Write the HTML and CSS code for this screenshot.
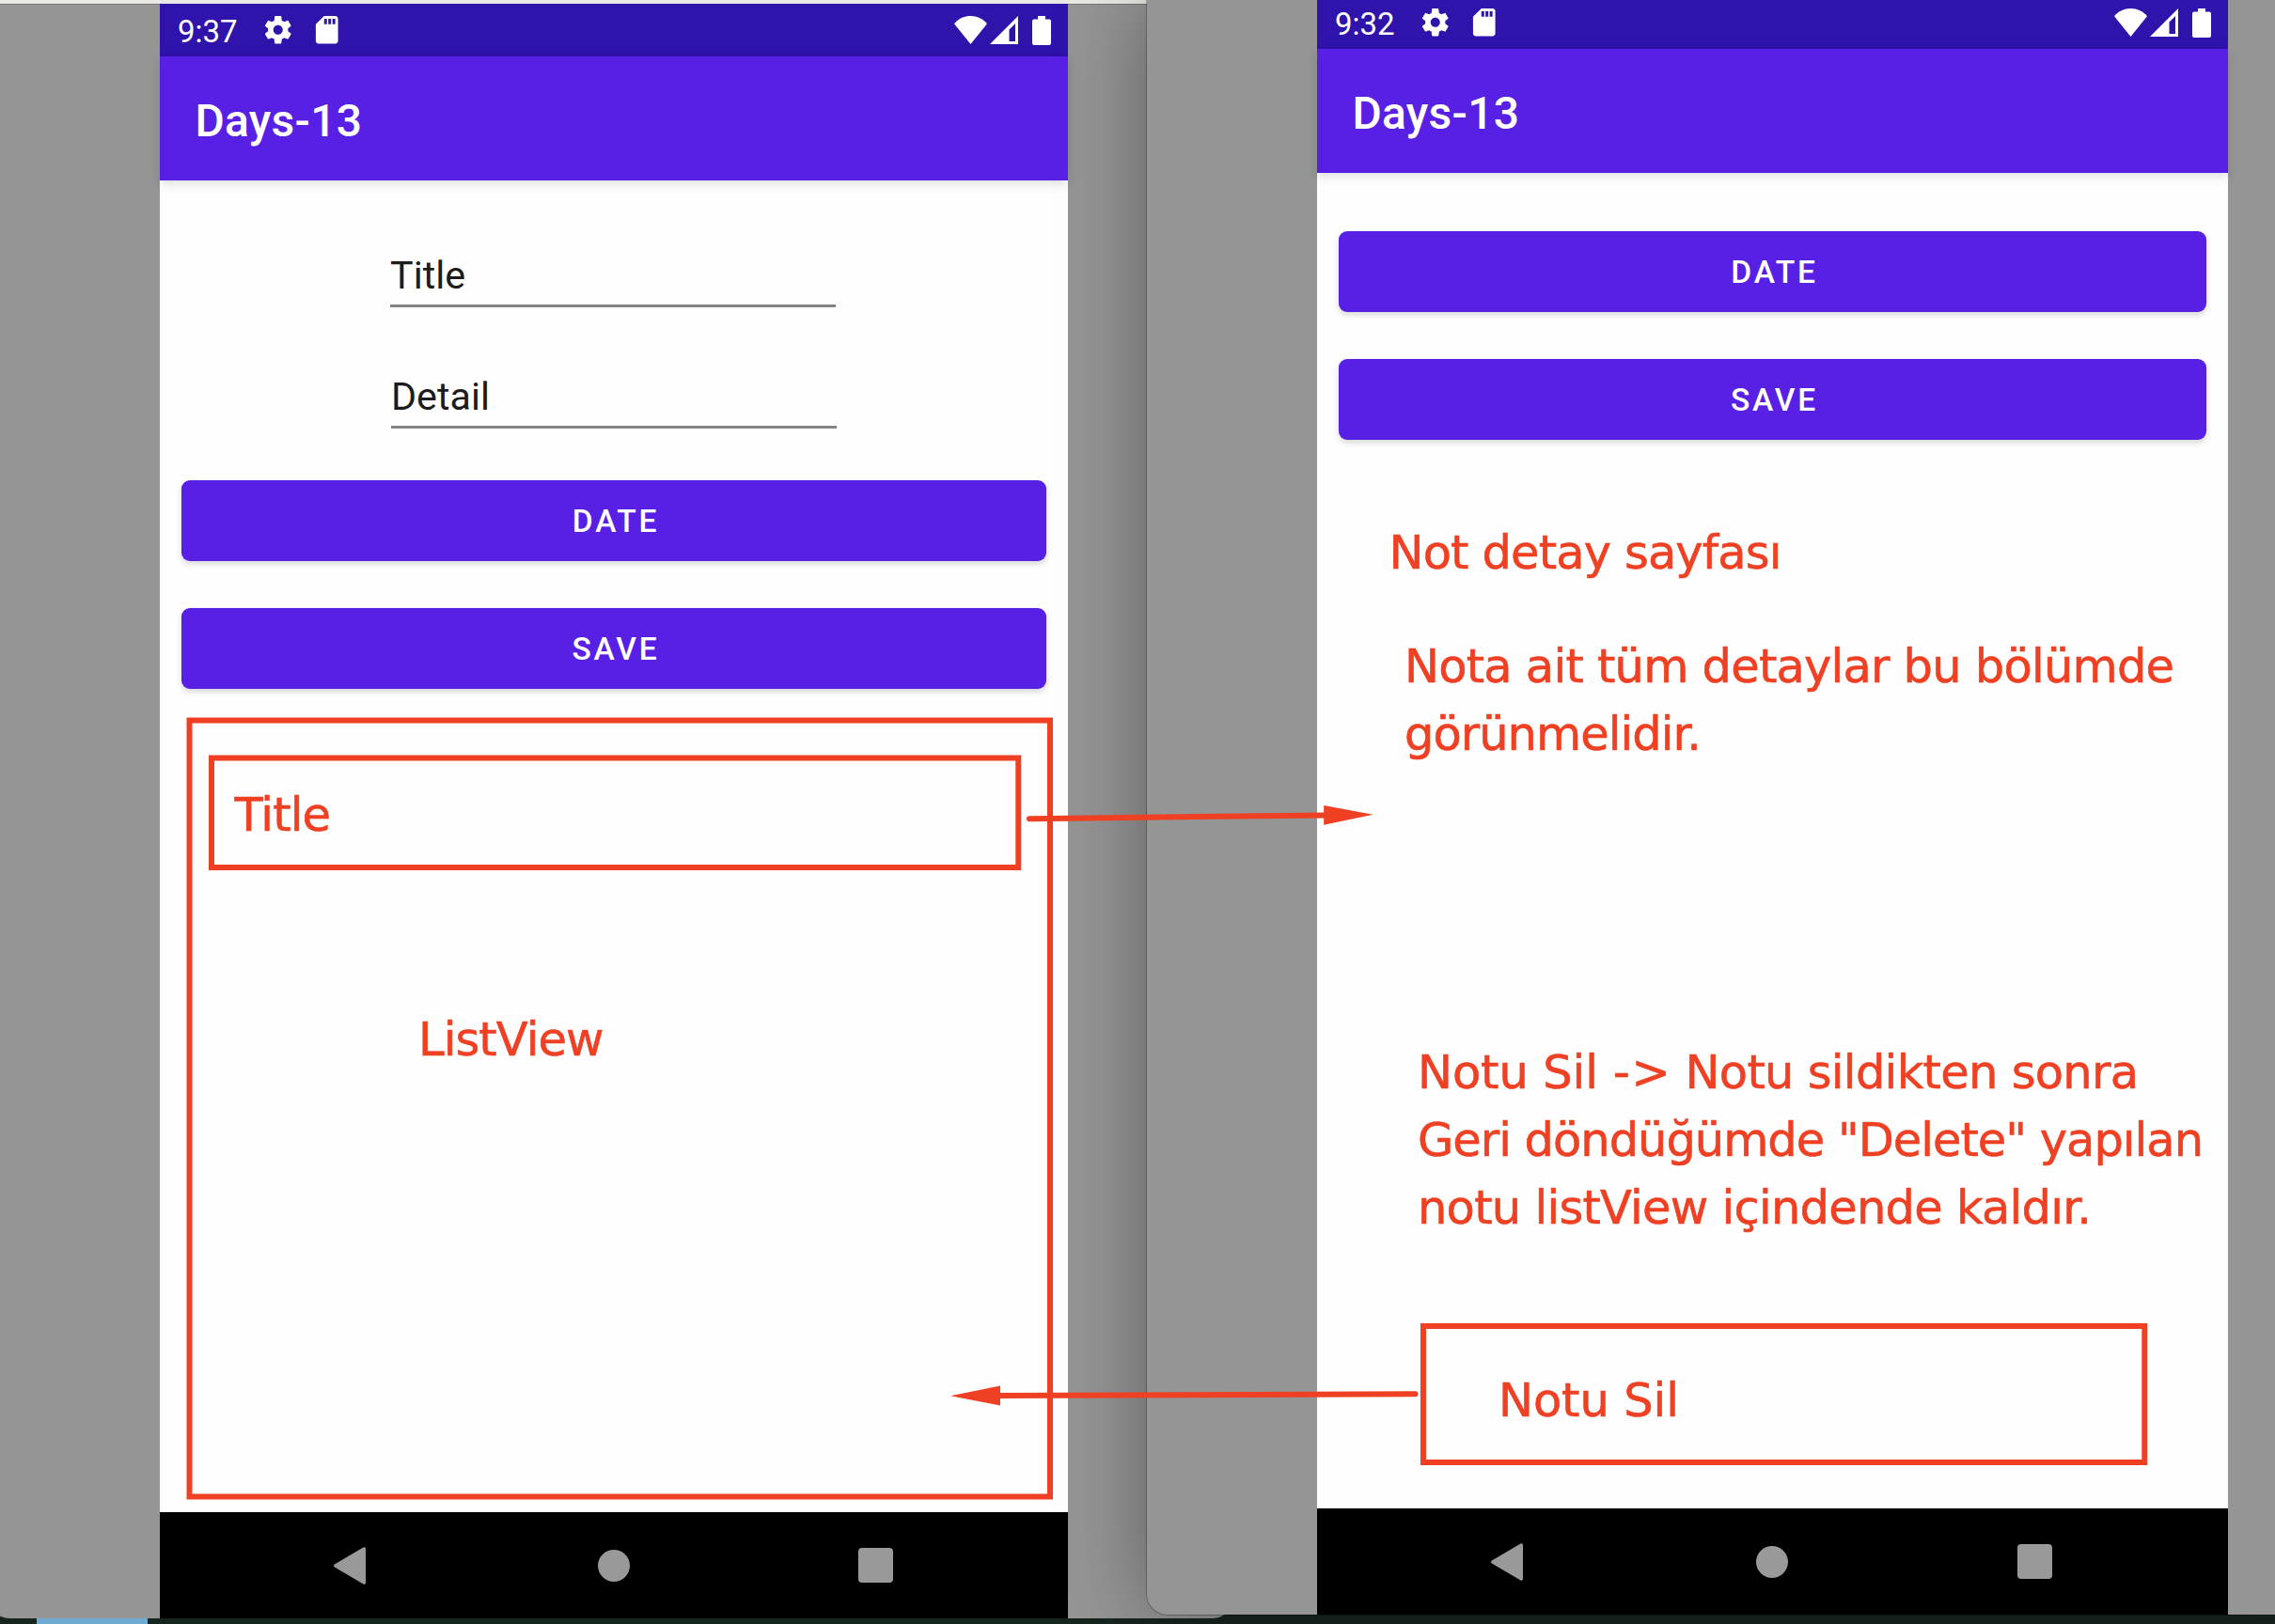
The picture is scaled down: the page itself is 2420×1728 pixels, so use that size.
FILE: index.html
```
<!DOCTYPE html>
<html lang="tr">
<head>
<meta charset="utf-8">
<title>Days-13</title>
<link rel="stylesheet" href="styles.css">
</head>
<body>
<svg class="symbols" aria-hidden="true">
  <symbol id="gear" viewBox="0 0 24 24"><path d="M19.14 12.94c.04-.3.06-.61.06-.94 0-.32-.02-.64-.07-.94l2.03-1.58c.18-.14.23-.41.12-.61l-1.92-3.32c-.12-.22-.37-.29-.59-.22l-2.39.96c-.5-.38-1.03-.7-1.62-.94L14.400 2.500c-.04-.3-.24-.5-.5-.5h-3.800c-.26 0-.46.2-.5.5L9.250 5.350c-.59.24-1.130.57-1.620.94l-2.390-.96c-.22-.08-.47 0-.59.220L2.740 8.870c-.12.21-.08.47.12.61l2.030 1.580c-.05.3-.09.63-.09.94s.02.64.07.94l-2.030 1.580c-.18.14-.23.41-.12.61l1.920 3.320c.12.22.37.29.59.22l2.390-.96c.5.38 1.030.7 1.620.94l.36 2.850c.04.300.24.500.500.500h3.800c.260 0 .460-.200.500-.500l.36-2.850c.59-.24 1.130-.56 1.620-.94l2.390.96c.22.08.47 0 .59-.22l1.920-3.320c.12-.22.07-.47-.12-.61l-2.010-1.580zM12 15.400c-1.880 0-3.400-1.520-3.400-3.400s1.520-3.400 3.400-3.400 3.400 1.520 3.400 3.400-1.520 3.400-3.400 3.400z"/></symbol>
  <symbol id="sd" viewBox="0 0 24 24"><path d="M18 2h-8L4 8v12c0 1.100.9 2 2 2h12c1.100 0 2-.9 2-2V4c0-1.100-.9-2-2-2zm-6 6h-2V4h2v4zm3 0h-2V4h2v4zm3 0h-2V4h2v4z"/></symbol>
  <symbol id="wifi" viewBox="0 0 35 30"><path d="M17.500 30 0 8.200C4.500 3 10.500 0 17.500 0S30.500 3 35 8.200z"/></symbol>
  <symbol id="signal" viewBox="0 0 30 30"><path fill-rule="evenodd" d="M30 0v30H0zM27 8l-6.500 6.500V27H27z"/></symbol>
  <symbol id="battery" viewBox="0 0 20 31"><path d="M6 0h8v3.500h4a2 2 0 0 1 2 2V29a2 2 0 0 1-2 2H2a2 2 0 0 1-2-2V5.500a2 2 0 0 1 2-2h4z"/></symbol>
  <symbol id="back" viewBox="0 0 34 40"><path d="M31 .8c1.500-1.200 3-.5 3 1.200v36c0 1.700-1.500 2.400-3 1.200L.9 21.500c-1.200-1-1.200-2 0-3z"/></symbol>
</svg>

<main class="desktop">
  <div class="dock-tile"></div>
  <section class="window window-list">
    <div class="phone">
      <div class="status">
        <span class="clock">9:37</span>
        <svg class="ico"><use href="#gear"/></svg>
        <svg class="ico"><use href="#sd"/></svg>
        <div class="system">
          <svg class="wifi"><use href="#wifi"/></svg>
          <svg class="signal"><use href="#signal"/></svg>
          <svg class="battery"><use href="#battery"/></svg>
        </div>
      </div>
      <header class="appbar">Days-13</header>
      <div class="content">
        <div class="field">Title</div>
        <div class="field field-detail">Detail</div>
        <button class="btn">DATE</button>
        <button class="btn">SAVE</button>
      </div>
      <nav class="navbar">
        <svg class="back"><use href="#back"/></svg>
        <span class="home"></span>
        <span class="recent"></span>
      </nav>
    </div>
  </section>

  <section class="window window-detail">
    <div class="phone">
      <div class="status">
        <span class="clock">9:32</span>
        <svg class="ico"><use href="#gear"/></svg>
        <svg class="ico"><use href="#sd"/></svg>
        <div class="system">
          <svg class="wifi"><use href="#wifi"/></svg>
          <svg class="signal"><use href="#signal"/></svg>
          <svg class="battery"><use href="#battery"/></svg>
        </div>
      </div>
      <header class="appbar">Days-13</header>
      <div class="content">
        <button class="btn">DATE</button>
        <button class="btn">SAVE</button>
      </div>
      <nav class="navbar">
        <svg class="back"><use href="#back"/></svg>
        <span class="home"></span>
        <span class="recent"></span>
      </nav>
    </div>
  </section>

  <svg class="notes" viewBox="0 0 2420 1728">
    <g class="outline">
      <rect x="201.500" y="766.500" width="915.500" height="826"/>
      <rect x="225" y="806.500" width="858.300" height="116.500"/>
      <rect x="1514" y="1411" width="767.300" height="145"/>
      <path d="M1095 871.200 1410 867.400M1505.500 1483.300 1062 1485"/>
    </g>
    <path d="M1408.200 857v20.700L1460.500 866.700zM1064 1474.500v21L1011 1485.200z"/>
    <g class="labels">
      <text x="249.500" y="884" textLength="102.500">Title</text>
      <text x="445" y="1123" textLength="197.500">ListView</text>
      <text x="1477.500" y="605" textLength="418">Not detay sayfası</text>
      <text x="1494" y="726" textLength="819">Nota ait tüm detaylar bu bölümde</text>
      <text x="1494" y="798" textLength="316">görünmelidir.</text>
      <text x="1508" y="1158" textLength="192">Notu Sil</text>
      <text x="1716" y="1158" textLength="61">-&gt;</text>
      <text x="1792.500" y="1158" textLength="482.500">Notu sildikten sonra</text>
      <text x="1508" y="1230" textLength="836">Geri döndüğümde "Delete" yapılan</text>
      <text x="1508" y="1302" textLength="717">notu listView içindende kaldır.</text>
      <text x="1594" y="1507" textLength="192">Notu Sil</text>
    </g>
  </svg>
</main>
</body>
</html>
```
FILE: styles.css
```
* { box-sizing: border-box; }

body {
  margin: 0;
  font-family: Roboto, sans-serif;
}

.symbols { display: none; }

.desktop {
  position: relative;
  width: 2420px;
  height: 1728px;
  overflow: hidden;
  background: linear-gradient(#e9e8e5 0 4px, #17251f 4px);
}

.dock-tile {
  position: absolute;
  left: 39px;
  bottom: 0;
  width: 118px;
  height: 8px;
  background: #6fabd2;
}

.window {
  position: absolute;
  display: flex;
  background: #959595;
}

.window-list {
  left: -12px;
  top: 4px;
  width: 1324px;
  height: 1718px;
  padding-left: 182px;
  border-radius: 0 0 22px 22px;
  box-shadow: inset 0 1px #767676;
}

.window-detail {
  left: 1220px;
  top: -4px;
  width: 1240px;
  height: 1722px;
  padding-left: 181px;
  border-radius: 0 0 0 22px;
  box-shadow: 0 0 0 1px rgba(0, 0, 0, .25), 0 0 90px rgba(0, 0, 0, .36);
}

.phone {
  display: flex;
  flex-direction: column;
  width: 966px;
  background: #fefefe;
}

.window-detail .phone { width: 969px; }

.status {
  display: flex;
  align-items: center;
  height: 56px;
  padding: 0 18px 0 19px;
  background: #2f13aa;
  color: #fff;
  fill: #fff;
}

.clock {
  width: 89px;
  font-size: 33px;
  line-height: 56px;
  padding-top: 3px;
}

.ico {
  width: 35.500px;
  height: 35.500px;
  margin-right: 16px;
}

.system {
  display: flex;
  align-items: flex-end;
  margin-left: auto;
}

.wifi { width: 35px; height: 30px; margin-right: 3px; margin-bottom: 1px; }
.signal { width: 30px; height: 30px; margin-right: 15.500px; margin-bottom: 1px; }
.battery { width: 20px; height: 31px; }

.appbar {
  height: 131.500px;
  padding: 1px 0 0 37.500px;
  background: #5820e4;
  box-shadow: 0 4px 10px rgba(0, 0, 0, .12);
  color: #fff;
  font-size: 48px;
  font-weight: 500;
  line-height: 135px;
  letter-spacing: .25px;
}

.window-detail .appbar { height: 132px; }

.content {
  flex: 1;
  display: flex;
  flex-direction: column;
  align-items: center;
  padding: 61.500px 23px 0;
}

.window-list .content { padding-top: 72.500px; }

.field {
  position: relative;
  left: -1px;
  width: 474px;
  height: 63px;
  margin-bottom: 66px;
  border-bottom: 3px solid #828282;
  color: #1c1c1c;
  font-size: 41.300px;
  line-height: 58px;
}

.field-detail {
  left: 0;
  margin-bottom: 55px;
}

.btn {
  width: 100%;
  height: 86px;
  margin: 0 0 50px;
  padding: 1px 0 0 4px;
  border: 0;
  border-radius: 9px;
  background: #5820e4;
  box-shadow: 0 3px 6px rgba(0, 0, 0, .16);
  color: #fff;
  font: 500 33.600px Roboto, sans-serif;
  letter-spacing: 2.800px;
}

.navbar {
  display: flex;
  align-items: center;
  height: 113px;
  padding-left: 185px;
  background: #000;
  fill: #999;
}

.back { width: 34px; height: 40px; }

.home {
  width: 34px;
  height: 34px;
  margin-left: 247px;
  border-radius: 50%;
  background: #999;
}

.recent {
  width: 36.500px;
  height: 36.500px;
  margin-left: 243px;
  border-radius: 4px;
  background: #999;
}

.window-detail .home { margin-left: 248px; }
.window-detail .recent { margin-left: 244px; }

.notes {
  position: absolute;
  inset: 0;
  width: 2420px;
  height: 1728px;
  fill: #ef4023;
}

.labels {
  font-family: "DejaVu Sans", sans-serif;
  font-size: 49.500px;
  stroke: #ef4023;
  stroke-width: .6;
}

.outline {
  fill: none;
  stroke: #ef4023;
  stroke-width: 6;
  stroke-linecap: round;
}
```
